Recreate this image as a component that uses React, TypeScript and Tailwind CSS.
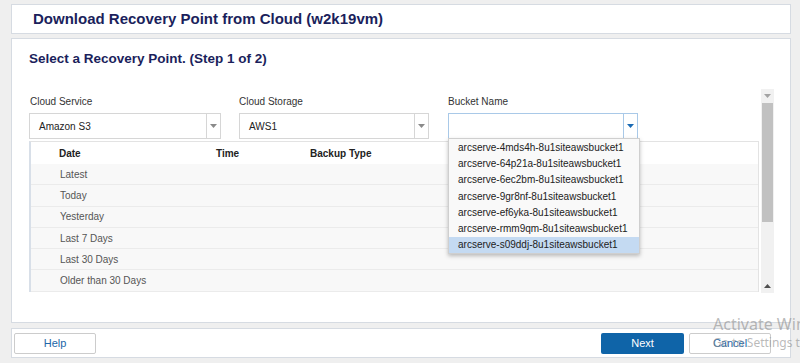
import { ReactNode } from "react";

const buckets = [
  "arcserve-4mds4h-8u1siteawsbucket1",
  "arcserve-64p21a-8u1siteawsbucket1",
  "arcserve-6ec2bm-8u1siteawsbucket1",
  "arcserve-9gr8nf-8u1siteawsbucket1",
  "arcserve-ef6yka-8u1siteawsbucket1",
  "arcserve-rmm9qm-8u1siteawsbucket1",
  "arcserve-s09ddj-8u1siteawsbucket1",
];

const dateRows = ["Latest", "Today", "Yesterday", "Last 7 Days", "Last 30 Days", "Older than 30 Days"];

function Caret({ color }: { color: string }) {
  return (
    <svg width="7" height="4" viewBox="0 0 7 4">
      <path d="M0 0h7L3.5 4z" fill={color} />
    </svg>
  );
}

function Select({
  width,
  value,
  active,
  children,
}: {
  width: string;
  value: string;
  active?: boolean;
  children?: ReactNode;
}) {
  return (
    <div className={`relative ${width}`}>
      <div
        className={`flex h-[26px] border bg-white ${active ? "border-[#a9c9e8]" : "border-[#d6d6d6]"}`}
      >
        <div className="flex flex-1 items-center pl-[9px] text-[10px] text-[#222]">{value}</div>
        <div
          className={`flex w-[14px] items-center justify-center border-l ${
            active ? "border-[#a9c9e8]" : "border-[#d6d6d6]"
          }`}
        >
          <Caret color={active ? "#1a6ab4" : "#8a8a8a"} />
        </div>
      </div>
      {children}
    </div>
  );
}

export default function App() {
  return (
    <div
      className="relative h-[363px] w-[800px] overflow-hidden bg-[#efefef] pl-[11px] pr-[9px] pt-[4px]"
      style={{ fontFamily: '"Liberation Sans", Arial, sans-serif' }}
    >
      {/* header */}
      <div className="flex h-[30px] items-center border border-[#d6dbe2] bg-white pl-[21px]">
        <h1 className="text-[15px] font-bold text-[#1b1f5c]">Download Recovery Point from Cloud (w2k19vm)</h1>
      </div>

      {/* main panel */}
      <div className="mt-[4px] h-[285px] border border-[#d6dbe2] bg-white pl-[17px]">
        <h2 className="pt-[11px] text-[13.5px] font-bold leading-[18px] text-[#1b1f5c]">
          Select a Recovery Point. (Step 1 of 2)
        </h2>

        <div className="mt-[21px] flex h-[204px]">
          <div className="relative w-[730px]">
            <div className="flex pt-[7px] text-[10px] leading-[12px] text-[#333]">
              <div className="w-[210px] pl-[1px]">Cloud Service</div>
              <div className="w-[209px]">Cloud Storage</div>
              <div>Bucket Name</div>
            </div>

            <div className="mt-[5px] flex">
              <div className="w-[210px]">
                <Select width="w-[192px]" value="Amazon S3" />
              </div>
              <div className="w-[209px]">
                <Select width="w-[190px]" value="AWS1" />
              </div>
              <Select width="w-[190px]" value="" active>
                <div className="absolute left-0 top-[25px] z-10 w-[192px] border border-[#cfcfcf] bg-[#f9f9f9] shadow-[0_2px_4px_rgba(0,0,0,0.25)]">
                  {buckets.map((b, i) => (
                    <div
                      key={b}
                      className={`flex h-[16.3px] items-center pl-[9px] text-[10px] text-[#222] ${
                        i === buckets.length - 1 ? "bg-[#c4daf2]" : ""
                      }`}
                    >
                      {b}
                    </div>
                  ))}
                </div>
              </Select>
            </div>

            {/* table */}
            <div className="mt-[2px] border-l-2 border-r border-t border-l-[#d8dfe8] border-r-[#e3e3e3] border-t-[#e3e3e3]">
              <div className="flex h-[22px] items-center bg-white text-[10px] font-bold text-[#222]">
                <div className="w-[185px] pl-[28px]">Date</div>
                <div className="w-[94px]">Time</div>
                <div>Backup Type</div>
              </div>
              {dateRows.map((r) => (
                <div
                  key={r}
                  className="flex h-[21.3px] items-center border-b border-[#ebebeb] bg-[#f8f8f8] pl-[29px] text-[10px] text-[#555]"
                >
                  {r}
                </div>
              ))}
            </div>
          </div>

          {/* scrollbar */}
          <div className="ml-[2px] flex w-[13px] flex-col bg-[#f1f1f1]">
            <div className="flex h-[14px] items-center justify-center">
              <Caret color="#a3a3a3" />
            </div>
            <div className="mx-[1px] h-[119px] bg-[#c1c1c1]" />
            <div className="flex-1" />
            <div className="flex h-[14px] items-center justify-center">
              <div className="rotate-180">
                <Caret color="#505050" />
              </div>
            </div>
          </div>
        </div>
      </div>

      {/* footer */}
      <div className="mt-[5px] flex h-[30px] items-center justify-between border border-[#d6dbe2] bg-white pl-[2px] pr-[19px]">
        <button className="h-[21px] w-[82px] rounded-[2px] border border-[#cccccc] bg-white text-[11px] text-[#2166a8]">
          Help
        </button>
        <div className="flex gap-[5px]">
          <button className="h-[21px] w-[83px] rounded-[2px] bg-[#0f64a8] text-[11px] text-white">Next</button>
          <button className="h-[21px] w-[82px] rounded-[2px] border border-[#cccccc] bg-white text-[11px] text-[#2166a8]">
            Cancel
          </button>
        </div>
      </div>

      {/* windows watermark */}
      <div
        className="pointer-events-none absolute left-[713px] top-[314px] whitespace-nowrap text-[rgba(140,140,140,0.6)]"
        style={{ fontFamily: '"Noto Sans", "Open Sans", sans-serif' }}
      >
        <div className="text-[16px] leading-[21px]">Activate Windows</div>
        <div className="text-[12px] leading-[16px]">Go to Settings to activate Windows.</div>
      </div>
    </div>
  );
}
